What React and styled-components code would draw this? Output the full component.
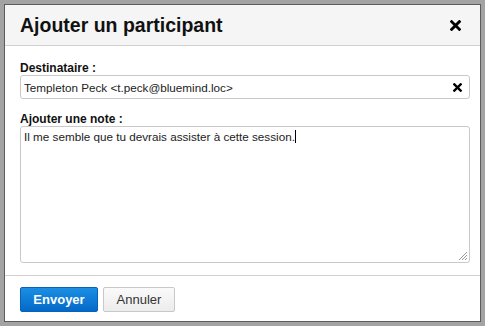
import React from "react";
import styled, { createGlobalStyle } from "styled-components";

const GlobalStyle = createGlobalStyle`
  html, body {
    margin: 0;
    padding: 0;
    background: #a3a3a3;
    font-family: "Liberation Sans", Arial, sans-serif;
  }
`;

const Backdrop = styled.div`
  width: 485px;
  height: 326px;
  box-sizing: border-box;
  padding: 4px;
  background-color: #a3a3a3;
`;

const Dialog = styled.div`
  width: 477px;
  height: 318px;
  box-sizing: border-box;
  background: #fff;
  border: 1px solid #5c5c5c;
  display: flex;
  flex-direction: column;
`;

const Header = styled.div`
  display: flex;
  align-items: center;
  justify-content: space-between;
  height: 40px;
  padding: 0 15px;
  background: #f5f5f5;
  border-bottom: 1px solid #cfcfcf;
`;

const Title = styled.h1`
  margin: 0;
  font-size: 19.5px;
  font-weight: bold;
  color: #111;
  padding-top: 1px;
`;

const CloseIcon = ({ size = 11 }) => (
  <svg width={size} height={size} viewBox="0 0 10 10">
    <path d="M1.5 1.5 L8.5 8.5 M8.5 1.5 L1.5 8.5" stroke="#000" strokeWidth="2.6" strokeLinecap="square" />
  </svg>
);

const CloseButton = styled.span`
  display: flex;
  margin-right: 4px;
`;

const Body = styled.div`
  flex: 1;
  padding: 15px 10px 0 15px;
  display: flex;
  flex-direction: column;
  border-bottom: 1px solid #d2d2d2;
`;

const Label = styled.div`
  font-size: 12px;
  font-weight: bold;
  color: #111;
  line-height: 14px;
  margin-top: ${(p) => p.$top || 0}px;
`;

const Field = styled.div`
  display: flex;
  align-items: center;
  justify-content: space-between;
  height: 24px;
  box-sizing: border-box;
  border: 1px solid #c9c9c9;
  border-radius: 3px;
  padding: 0 7px 0 3px;
  font-size: 11.7px;
  color: #222;
`;

const NoteBox = styled.div`
  position: relative;
  height: 137px;
  box-sizing: border-box;
  border: 1px solid #c9c9c9;
  border-radius: 3px;
  padding: 3px;
  font-size: 11.7px;
  line-height: 14px;
  color: #222;
`;

const Caret = styled.span`
  display: inline-block;
  width: 1px;
  height: 13px;
  background: #000;
  vertical-align: -2px;
`;

const Grip = styled.svg`
  position: absolute;
  right: 1px;
  bottom: 1px;
`;

const Footer = styled.div`
  display: flex;
  gap: 5px;
  padding: 11px 15px 0 15px;
  height: 45px;
  box-sizing: border-box;
`;

const Button = styled.button`
  height: 25px;
  box-sizing: border-box;
  padding: 0 12px;
  border-radius: 2px;
  font-family: "Liberation Sans", Arial, sans-serif;
  font-size: 13px;
  cursor: pointer;
  border: 1px solid ${(p) => (p.$primary ? "#0a62b8" : "#c8c8c8")};
  color: ${(p) => (p.$primary ? "#fff" : "#333")};
  font-weight: ${(p) => (p.$primary ? "bold" : "normal")};
  background: ${(p) =>
    p.$primary
      ? "linear-gradient(#1b8fe3, #0468c8)"
      : "linear-gradient(#fafafa, #ececec)"};
  width: ${(p) => p.$w}px;
`;

export default function App() {
  return (
    <>
      <GlobalStyle />
      <Backdrop>
        <Dialog>
          <Header>
            <Title>Ajouter un participant</Title>
            <CloseButton>
              <CloseIcon size={11} />
            </CloseButton>
          </Header>
          <Body>
            <Label>Destinataire :</Label>
            <Field>
              <span>Templeton Peck &lt;t.peck@bluemind.loc&gt;</span>
              <CloseIcon size={9} />
            </Field>
            <Label $top={13}>Ajouter une note :</Label>
            <NoteBox>
              Il me semble que tu devrais assister à cette session.<Caret />
              <Grip width="10" height="10" viewBox="0 0 10 10">
                <path d="M9 1 L1 9 M9 4 L4 9 M9 7 L7 9" stroke="#999" strokeWidth="1" />
              </Grip>
            </NoteBox>
          </Body>
          <Footer>
            <Button $primary $w={78}>Envoyer</Button>
            <Button $w={72}>Annuler</Button>
          </Footer>
        </Dialog>
      </Backdrop>
    </>
  );
}
